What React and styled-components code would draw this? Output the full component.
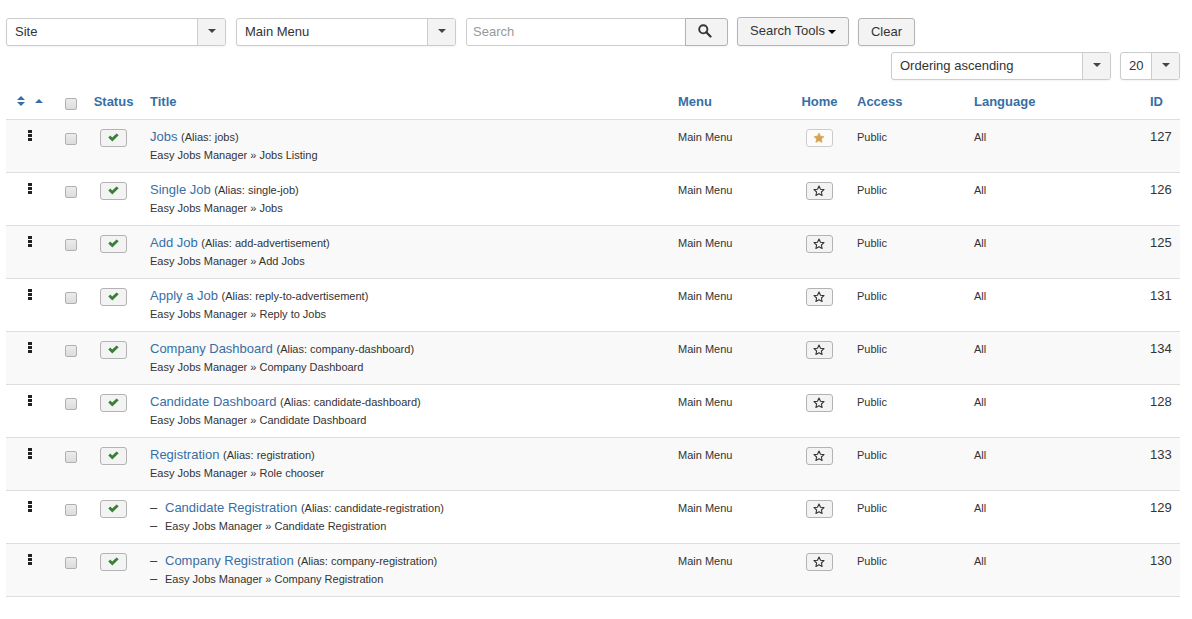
import React from "react";
import styled, { createGlobalStyle } from "styled-components";

const GlobalStyle = createGlobalStyle`
  * { box-sizing: border-box; }
  body {
    margin: 0;
    background: #fff;
    color: #333;
    font: 13px/18px "Liberation Sans", Arial, sans-serif;
  }
  button, input, select { font: inherit; color: inherit; margin: 0; }
  a { color: #366fa5; text-decoration: none; }
`;

const Page = styled.main`
  padding: 17px 12px 22px 6px;
`;

const Toolbar = styled.form`
  display: flex;
  flex-wrap: wrap;
  align-items: flex-end;
  gap: 9px;
`;

const Filters = styled.div`
  display: flex;
  gap: 10px;
`;

const ListOptions = styled.div`
  display: flex;
  justify-content: flex-end;
  gap: 9px;
  margin: 6px 0 4px;
`;

const SelectBox = styled.div`
  display: grid;
  grid-template-columns: 1fr 28px;
  width: ${(p) => p.$width}px;
  height: 28px;
  border: 1px solid #ccc;
  border-radius: 3px;
  background: #fff;
  box-shadow: 0 1px 2px rgba(0, 0, 0, 0.05);
  overflow: hidden;
`;

const Select = styled.select`
  grid-area: 1 / 1 / 2 / 3;
  appearance: none;
  min-width: 0;
  padding: 0 30px 0 8px;
  border: 0;
  background: transparent;
`;

const SelectArrow = styled.span`
  grid-area: 1 / 2;
  display: flex;
  align-items: center;
  justify-content: center;
  padding-bottom: 2px;
  border-left: 1px solid #ccc;
  background: #f3f3f3;
  pointer-events: none;
`;

const SearchGroup = styled.div`
  display: flex;
  height: 28px;
`;

const SearchInput = styled.input`
  width: 220px;
  padding: 0 6px;
  border: 1px solid #ccc;
  border-radius: 3px 0 0 3px;
  background: #fff;
  &::placeholder { color: #999; opacity: 1; }
`;

const Button = styled.button`
  display: inline-flex;
  align-items: center;
  justify-content: center;
  gap: 3px;
  height: ${(p) => (p.$tall ? 29 : 28)}px;
  padding: 0 12px ${(p) => (p.$tall ? 2 : 0)}px;
  border: 1px solid #b3b3b3;
  border-radius: 3px;
  background: #f3f3f3;
  box-shadow: 0 1px 2px rgba(0, 0, 0, 0.05);
  svg { margin-top: 2px; }
`;

const SearchButton = styled(Button)`
  width: 43px;
  margin-left: -1px;
  padding: 0 3px 4px 0;
  border-radius: 0 3px 3px 0;
`;

const Table = styled.table`
  width: 100%;
  table-layout: fixed;
  border-collapse: separate;
  border-spacing: 0;
  border-bottom: 1px solid #ddd;
`;

const Col = styled.col`
  width: ${(p) => (p.$width ? `${p.$width}px` : "auto")};
`;

const Th = styled.th`
  height: 35px;
  padding: 9px ${(p) => (p.$center ? 0 : 8)}px 8px;
  text-align: ${(p) => (p.$center ? "center" : "left")};
  vertical-align: top;
  font-weight: bold;
  white-space: nowrap;
`;

const Row = styled.tr`
  background: #fff;
  &:nth-child(odd) { background: #f9f9f9; }
`;

const Td = styled.td`
  height: 53px;
  padding: 8px ${(p) => (p.$center ? 0 : 8)}px;
  border-top: 1px solid #ddd;
  text-align: ${(p) => (p.$center ? "center" : "left")};
  vertical-align: top;
  font-size: ${(p) => (p.$small ? 11 : 13)}px;
`;

const SortLinks = styled.span`
  display: flex;
  justify-content: center;
  align-items: center;
  gap: 10px;
  height: 16px;
  a { display: flex; }
`;

const DragHandle = styled.button`
  display: block;
  margin: 2px auto 0;
  padding: 0;
  border: 0;
  background: none;
  line-height: 0;
  cursor: move;
`;

const Checkbox = styled.input.attrs({ type: "checkbox" })`
  appearance: none;
  display: block;
  width: 12px;
  height: 12px;
  margin: 5px 0 0 12px;
  border: 1px solid #b0b0b0;
  border-radius: 2px;
  background: linear-gradient(#ececec, #dcdcdc);
  &:checked { background: #3071a9; }
`;

const MicroButton = styled.button`
  display: flex;
  align-items: center;
  justify-content: center;
  width: 27px;
  height: 18px;
  margin: 1px auto 0;
  padding: 0 1px 1px 0;
  border: 1px solid ${(p) => (p.$plain ? "#ccc" : "#b3b3b3")};
  border-radius: 3px;
  background: ${(p) => (p.$plain ? "#fcfcfc" : "#f3f3f3")};
`;

const TitleBlock = styled.div`
  display: grid;
  grid-template-columns: ${(p) => (p.$child ? "15px 1fr" : "1fr")};
`;

const Small = styled.span`
  font-size: 11px;
`;

const Dash = styled.span`
  font-size: 13px;
`;

const CaretDown = ({ color = "#444" }) => (
  <svg width="8" height="4" viewBox="0 0 8 4" aria-hidden="true">
    <path d="M0 0H8L4 4Z" fill={color} />
  </svg>
);

const SearchIcon = () => (
  <svg width="14" height="14" viewBox="0 0 14 14" fill="none" stroke="#333" aria-hidden="true">
    <circle cx="5.3" cy="5.3" r="4.1" strokeWidth="1.9" />
    <path d="M8.3 8.3L12.5 12.5" strokeWidth="2.2" strokeLinecap="round" />
  </svg>
);

const SortBothIcon = () => (
  <svg width="8" height="10" viewBox="0 0 8 10" fill="#366fa5" aria-hidden="true">
    <path d="M0 4L4 0L8 4ZM0 6H8L4 10Z" />
  </svg>
);

const SortUpIcon = () => (
  <svg width="8" height="4" viewBox="0 0 8 4" fill="#366fa5" aria-hidden="true">
    <path d="M0 4L4 0L8 4Z" />
  </svg>
);

const DotsIcon = () => (
  <svg width="4" height="11" viewBox="0 0 4 11" fill="#222" aria-hidden="true">
    <path d="M0 0H4V3H0ZM0 4H4V7H0ZM0 8H4V11H0Z" />
  </svg>
);

const CheckIcon = () => (
  <svg width="11" height="9" viewBox="0 0 11 9" fill="#378137" aria-hidden="true">
    <path d="M0.3 4.6L2.3 2.6L4.2 4.4L8.6 0.5L10.7 2.2L4.3 8.6Z" />
  </svg>
);

const STAR = "M6 1L7.5 4.2L11 4.6L8.4 7L9.1 10.5L6 8.8L2.9 10.5L3.6 7L1 4.6L4.5 4.2Z";

const StarIcon = ({ filled }) => (
  <svg width="12" height="12" viewBox="0 0 12 12" aria-hidden="true">
    <path
      d={STAR}
      fill={filled ? "#d9a04e" : "none"}
      stroke={filled ? "#d9a04e" : "#333"}
      strokeWidth={filled ? 0.6 : 1.1}
      strokeLinejoin="round"
    />
  </svg>
);

const items = [
  { id: 127, title: "Jobs", alias: "jobs", type: "Jobs Listing", home: true },
  { id: 126, title: "Single Job", alias: "single-job", type: "Jobs" },
  { id: 125, title: "Add Job", alias: "add-advertisement", type: "Add Jobs" },
  { id: 131, title: "Apply a Job", alias: "reply-to-advertisement", type: "Reply to Jobs" },
  { id: 134, title: "Company Dashboard", alias: "company-dashboard", type: "Company Dashboard" },
  { id: 128, title: "Candidate Dashboard", alias: "candidate-dashboard", type: "Candidate Dashboard" },
  { id: 133, title: "Registration", alias: "registration", type: "Role chooser" },
  { id: 129, title: "Candidate Registration", alias: "candidate-registration", type: "Candidate Registration", child: true },
  { id: 130, title: "Company Registration", alias: "company-registration", type: "Company Registration", child: true },
];

function Dropdown({ label, value, width }) {
  return (
    <SelectBox $width={width}>
      <Select aria-label={label} defaultValue={value}>
        <option>{value}</option>
      </Select>
      <SelectArrow><CaretDown /></SelectArrow>
    </SelectBox>
  );
}

function ItemRow({ item }) {
  return (
    <Row>
      <Td $center>
        <DragHandle type="button" aria-label={`Reorder ${item.title}`}><DotsIcon /></DragHandle>
      </Td>
      <Td $center><Checkbox aria-label={`Select ${item.title}`} /></Td>
      <Td $center>
        <MicroButton type="button" aria-label="Published"><CheckIcon /></MicroButton>
      </Td>
      <Td>
        <TitleBlock $child={item.child}>
          {item.child && <Dash>–</Dash>}
          <span>
            <a href="#item">{item.title}</a> <Small>(Alias: {item.alias})</Small>
          </span>
          {item.child && <Dash>–</Dash>}
          <Small>Easy Jobs Manager » {item.type}</Small>
        </TitleBlock>
      </Td>
      <Td $small>Main Menu</Td>
      <Td $center>
        <MicroButton type="button" $plain={item.home} aria-label={item.home ? "Default page" : "Set as default page"}>
          <StarIcon filled={item.home} />
        </MicroButton>
      </Td>
      <Td $small>Public</Td>
      <Td $small>All</Td>
      <Td>{item.id}</Td>
    </Row>
  );
}

export default function App() {
  return (
    <Page>
      <GlobalStyle />
      <Toolbar onSubmit={(e) => e.preventDefault()}>
        <Filters>
          <Dropdown label="Client" value="Site" width={220} />
          <Dropdown label="Menu" value="Main Menu" width={220} />
          <SearchGroup>
            <SearchInput type="text" placeholder="Search" aria-label="Search" />
            <SearchButton type="submit" aria-label="Submit search"><SearchIcon /></SearchButton>
          </SearchGroup>
        </Filters>
        <Button type="button" $tall>Search Tools <CaretDown color="#000" /></Button>
        <Button type="button">Clear</Button>
      </Toolbar>
      <ListOptions>
        <Dropdown label="Sort by" value="Ordering ascending" width={220} />
        <Dropdown label="Items per page" value="20" width={60} />
      </ListOptions>
      <Table>
        <colgroup>
          <Col $width={47} />
          <Col $width={32} />
          <Col $width={57} />
          <Col />
          <Col $width={120} />
          <Col $width={59} />
          <Col $width={117} />
          <Col $width={176} />
          <Col $width={38} />
        </colgroup>
        <thead>
          <tr>
            <Th $center scope="col">
              <SortLinks>
                <a href="#order" aria-label="Sort by ordering"><SortBothIcon /></a>
                <a href="#ascending" aria-label="Ascending"><SortUpIcon /></a>
              </SortLinks>
            </Th>
            <Th $center scope="col"><Checkbox aria-label="Select all items" /></Th>
            <Th $center scope="col"><a href="#status">Status</a></Th>
            <Th scope="col"><a href="#title">Title</a></Th>
            <Th scope="col"><a href="#menu">Menu</a></Th>
            <Th $center scope="col"><a href="#home">Home</a></Th>
            <Th scope="col"><a href="#access">Access</a></Th>
            <Th scope="col"><a href="#language">Language</a></Th>
            <Th scope="col"><a href="#id">ID</a></Th>
          </tr>
        </thead>
        <tbody>
          {items.map((item) => <ItemRow key={item.id} item={item} />)}
        </tbody>
      </Table>
    </Page>
  );
}
